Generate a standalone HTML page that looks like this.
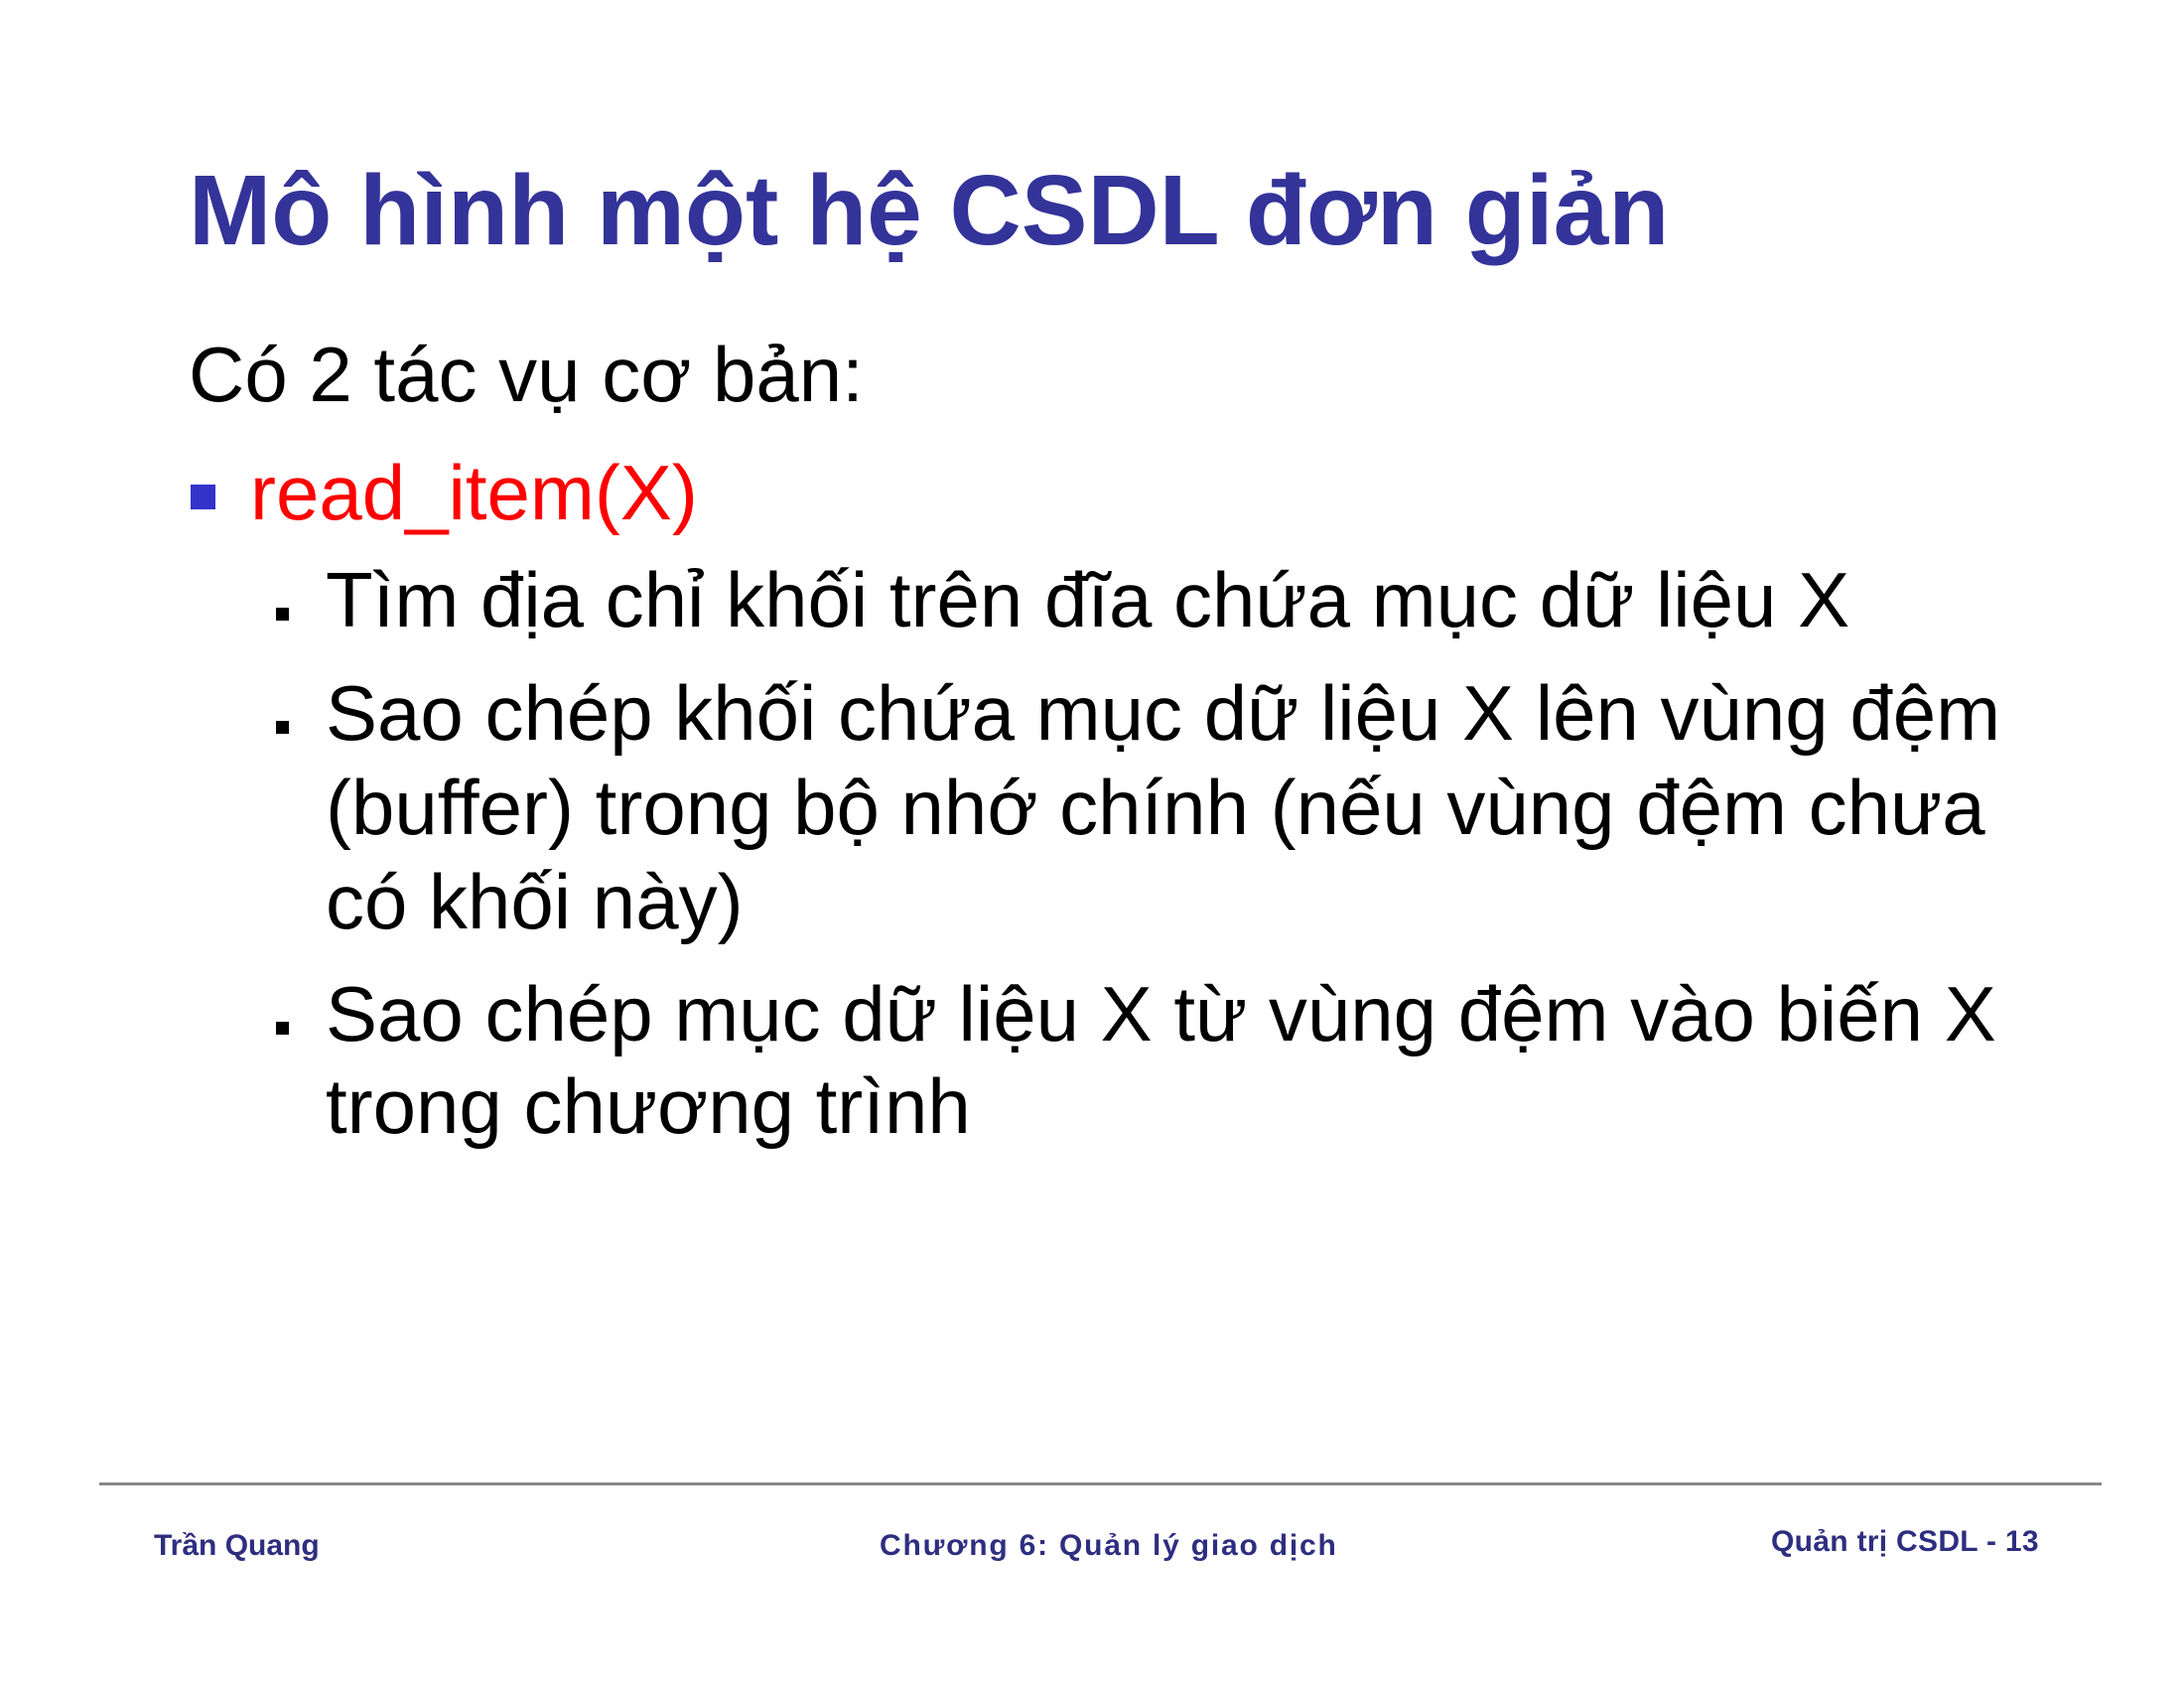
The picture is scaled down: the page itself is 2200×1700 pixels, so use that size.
<!DOCTYPE html>
<html><head><meta charset="utf-8"><style>
html,body{margin:0;padding:0;background:#fff;}
body{width:2200px;height:1700px;position:relative;overflow:hidden;font-family:"Liberation Sans",Arial,sans-serif;}
.t{position:absolute;white-space:nowrap;line-height:1;}
.title{left:190px;top:162px;font-size:100px;font-weight:bold;color:#333399;}
.b{font-size:78px;color:#000;}
.sq{position:absolute;background:#000;width:13px;height:13px;}
.f{font-size:30px;font-weight:bold;color:#2e2e80;}
</style></head><body>
<div class="t title">Mô hình một hệ CSDL đơn giản</div>
<div class="t b" style="left:190px;top:338px">Có 2 tác vụ cơ bản:</div>
<div style="position:absolute;left:192px;top:488px;width:25px;height:25px;background:#3333cc"></div>
<div class="t b" style="left:252px;top:457px;color:#ff0000">read_item(X)</div>
<div class="sq" style="left:278px;top:612px"></div>
<div class="t b" style="left:328px;top:565px">Tìm địa chỉ khối trên đĩa chứa mục dữ liệu X</div>
<div class="sq" style="left:278px;top:726px"></div>
<div class="t b" style="left:328px;top:679px">Sao chép khối chứa mục dữ liệu X lên vùng đệm</div>
<div class="t b" style="left:328px;top:774px">(buffer) trong bộ nhớ chính (nếu vùng đệm chưa</div>
<div class="t b" style="left:328px;top:869px">có khối này)</div>
<div class="sq" style="left:278px;top:1029px"></div>
<div class="t b" style="left:328px;top:982px">Sao chép mục dữ liệu X từ vùng đệm vào biến X</div>
<div class="t b" style="left:328px;top:1075px">trong chương trình</div>
<div style="position:absolute;left:100px;top:1493px;width:2017px;height:3px;background:#888"></div>
<div class="t f" style="left:155px;top:1542px">Trần Quang</div>
<div class="t f" style="left:886px;top:1542px;letter-spacing:1.8px">Chương 6: Quản lý giao dịch</div>
<div class="t f" style="left:1784px;top:1538px;letter-spacing:0.3px">Quản trị CSDL - 13</div>
</body></html>
